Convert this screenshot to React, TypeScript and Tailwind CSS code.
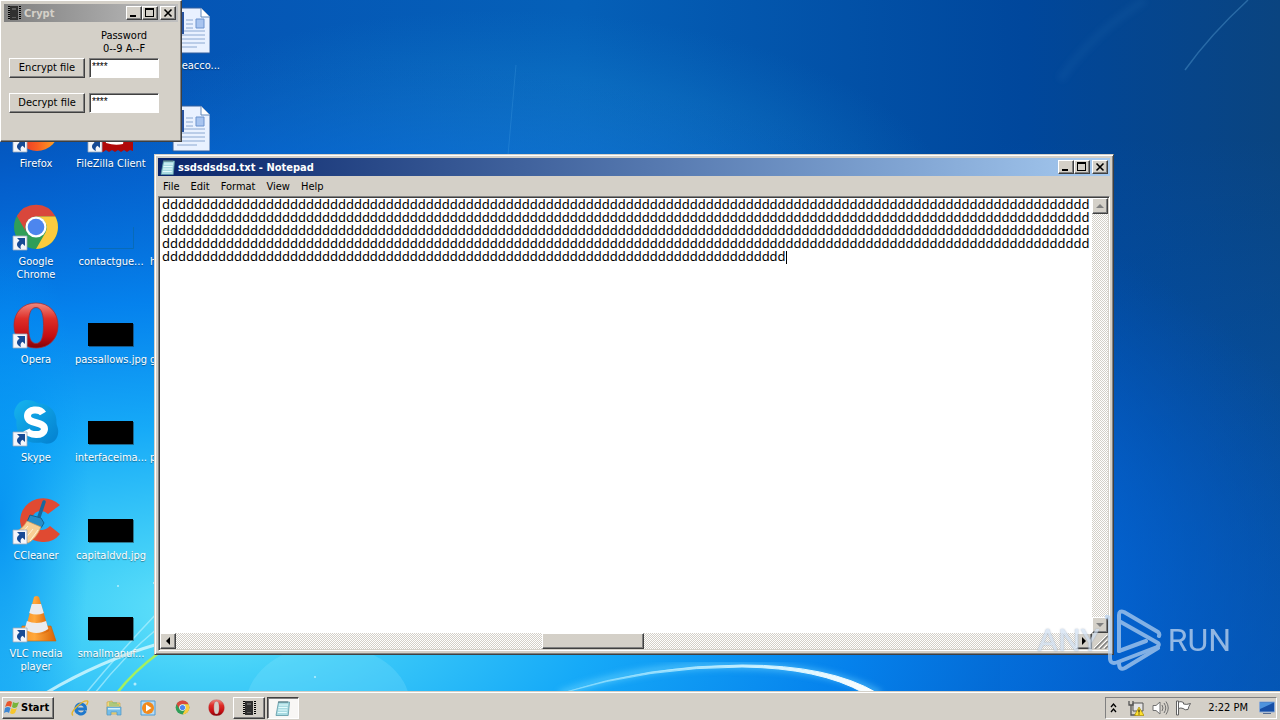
import React from "react";

const bevel =
  "bg-[#d4d0c8] border border-t-white border-l-white border-r-[#404040] border-b-[#404040] shadow-[inset_-1px_-1px_0_#808080]";

function Wallpaper() {
  return (
    <svg className="absolute inset-0 h-full w-full" viewBox="0 0 1280 691" preserveAspectRatio="none" aria-hidden="true">
      <defs>
        <linearGradient id="sky" x1="0" y1="0" x2="1" y2="0">
          <stop offset="0" stopColor="#0450b4" />
          <stop offset="0.45" stopColor="#0560b8" />
          <stop offset="0.8" stopColor="#00479c" />
          <stop offset="1" stopColor="#0a4480" />
        </linearGradient>
        <radialGradient id="glow" gradientUnits="userSpaceOnUse" cx="0" cy="0" r="1" gradientTransform="translate(210 610) scale(1180 560)">
          <stop offset="0" stopColor="#66e4fa" />
          <stop offset="0.12" stopColor="#42cff8" />
          <stop offset="0.33" stopColor="#16aaf8" />
          <stop offset="0.55" stopColor="#0584f0" stopOpacity="0.95" />
          <stop offset="0.78" stopColor="#0464d4" stopOpacity="0.75" />
          <stop offset="1" stopColor="#0454b8" stopOpacity="0" />
        </radialGradient>
        <radialGradient id="top" gradientUnits="userSpaceOnUse" cx="0" cy="0" r="1" gradientTransform="translate(500 220) scale(460 210)">
          <stop offset="0" stopColor="#2aa0e4" stopOpacity="0.85" />
          <stop offset="1" stopColor="#1080d0" stopOpacity="0" />
        </radialGradient>
        <radialGradient id="edge" gradientUnits="userSpaceOnUse" cx="0" cy="0" r="1" gradientTransform="translate(0 520) scale(90 300)">
          <stop offset="0" stopColor="#008cf0" stopOpacity="0.8" />
          <stop offset="1" stopColor="#0098f4" stopOpacity="0" />
        </radialGradient>
        <linearGradient id="low" x1="0" y1="0" x2="0" y2="1">
          <stop offset="0.2" stopColor="#0060d0" stopOpacity="0" />
          <stop offset="1" stopColor="#0060d0" stopOpacity="0.6" />
        </linearGradient>
        <linearGradient id="arc" x1="560" y1="0" x2="880" y2="0" gradientUnits="userSpaceOnUse">
          <stop offset="0" stopColor="#8fe0ff" stopOpacity="0.5" />
          <stop offset="0.6" stopColor="#c8f0ff" />
          <stop offset="1" stopColor="#fff" />
        </linearGradient>
        <filter id="soft"><feGaussianBlur stdDeviation="3" /></filter>
        <filter id="fine"><feGaussianBlur stdDeviation="0.6" /></filter>
      </defs>
      <rect width="1280" height="691" fill="url(#sky)" />
      <rect x="1000" width="280" height="691" fill="url(#low)" />
      <rect width="1280" height="691" fill="url(#top)" />
      <rect width="1280" height="691" fill="url(#glow)" />
      <rect width="1280" height="691" fill="url(#edge)" />
      <ellipse cx="328" cy="705" rx="82" ry="60" fill="#9cebff" opacity="0.2" />
      <path d="M560 694Q650 662 745 666Q830 668 880 694" fill="none" stroke="#78dcff" strokeWidth="7" opacity="0.5" filter="url(#soft)" />
      <path d="M562 693Q650 667 742 667Q820 668 864 693L877 693Q830 665 742 665Q650 665 562 693Z" fill="url(#arc)" stroke="url(#arc)" strokeWidth="1" />
      <path d="M46 693Q100 661 158 644" fill="none" stroke="#d8faff" strokeWidth="3" opacity="0.8" filter="url(#fine)" />
      <path d="M86 693Q120 652 158 612M95 693Q125 655 158 628" fill="none" stroke="#c0f5ff" strokeWidth="1.5" opacity="0.6" filter="url(#fine)" />
      <path d="M117 693Q133 672 160 652" fill="none" stroke="#a4f060" strokeWidth="2.5" filter="url(#fine)" />
      <path d="M1248 0Q1210 35 1185 70" fill="none" stroke="#3f83bb" strokeWidth="1.5" opacity="0.6" filter="url(#fine)" />
      <path d="M1145 0Q1090 35 1060 80" fill="none" stroke="#2c73b4" strokeWidth="8" opacity="0.15" filter="url(#soft)" />
      <path d="M516 65Q512 110 508 155" fill="none" stroke="#66b8ee" strokeWidth="1" opacity="0.2" />
      <g fill="#e4fbff" opacity="0.7"><circle cx="118" cy="586" r="1" /><circle cx="135" cy="684" r="1.5" /><circle cx="154" cy="583" r="1" /><circle cx="315" cy="677" r="1" /></g>
    </svg>
  );
}

function Shortcut() {
  return (
    <g>
      <path d="M1 33h14v14H1z" fill="#f4f6fa" stroke="#9aa9bd" strokeWidth="0.8" />
      <path d="M5 35h8v8l-2.500-2.300C8.500 42 8 43.500 9 46 4.500 44.500 3.500 40.500 7.500 37.600z" fill="#174a94" />
    </g>
  );
}

function IconBox({ children }: { children?: React.ReactNode }) {
  return <svg className="h-12 w-12 shrink-0" viewBox="0 0 48 48" aria-hidden="true">{children}</svg>;
}

function FirefoxIcon() {
  return (
    <IconBox>
      <defs><linearGradient id="ff" x1="0" y1="0" x2="1" y2="0"><stop offset="0" stopColor="#e0262c" /><stop offset="0.5" stopColor="#f95c22" /><stop offset="1" stopColor="#ffb024" /></linearGradient></defs>
      <circle cx="25" cy="24" r="22" fill="url(#ff)" />
      <circle cx="25" cy="22" r="11" fill="#5b3bb5" />
      <Shortcut />
    </IconBox>
  );
}

function FileZillaIcon() {
  return (
    <IconBox>
      <path d="M2 2h44v44l-3-1-3 2-3-2-3 2-3-2-3 2-3-2-3 2-3-2-3 2H2z" fill="#b00808" />
      <path d="M13 8h24v7H21v7h13v7h-8l-4 4h15l-1 6q-8 2-17-1z" fill="#fff" />
      <Shortcut />
    </IconBox>
  );
}

function ChromeArt() {
  return (
    <g>
      <circle cx="24" cy="24" r="22" fill="#2f9e58" />
      <path d="M4.900 13A22 22 0 0 1 43.500 13.500H24A11 11 0 0 0 14.500 29.500z" fill="#d9473c" />
      <path d="M43.300 13.500A22 22 0 0 1 24 46L33.500 29.500A11 11 0 0 0 24 13.500z" fill="#fbcb3e" />
      <circle cx="24" cy="24" r="10.500" fill="#fff" />
      <circle cx="24" cy="24" r="8.300" fill="#4d86ee" />
    </g>
  );
}

function OperaArt() {
  return (
    <g>
      <defs><linearGradient id="op" x1="0" y1="0" x2="0" y2="1"><stop offset="0" stopColor="#f08a80" /><stop offset="0.35" stopColor="#df2e28" /><stop offset="0.75" stopColor="#c40d12" /><stop offset="1" stopColor="#820408" /></linearGradient></defs>
      <path fillRule="evenodd" d="M24 2C37 2 46 11 46 24.500S37 47 24 47 2 38 2 24.500 11 2 24 2zM24 6.500c-6 0-7.500 8-7.500 18s1.500 18 7.500 18 7.500-8 7.500-18-1.500-18-7.500-18z" fill="url(#op)" stroke="#a32d36" strokeWidth="0.8" />
    </g>
  );
}

function SkypeIcon() {
  return (
    <IconBox>
      <defs><linearGradient id="sk" x1="0" y1="0" x2="1" y2="1"><stop offset="0" stopColor="#16b4ee" /><stop offset="1" stopColor="#0380d0" /></linearGradient></defs>
      <path d="M15 1C22 1 24 4 28 4.500 39 6 45 13 44.500 24 44.500 27 47 29 46 35 44 45 35 46 29 43.500 13 46 3 35 4.500 21 2 18 1 13 4 8 7 3 10 1 15 1z" fill="url(#sk)" />
      <path d="M31 14.500C28 9.500 15.500 9.500 15.500 17 15.500 26 32.500 21.500 32.500 30 32 37.500 17.500 37 14.500 31" fill="none" stroke="#fff" strokeWidth="7" />
      <Shortcut />
    </IconBox>
  );
}

function CCleanerIcon() {
  return (
    <IconBox>
      <path d="M48 8Q38-1 25 2 9 7 8 24q2 19 22 21 11 1 18-8L38 29q-6 6-13 3-6-4-5-11 2-7 9-7 4 0 7 3z" fill="#e04a32" />
      <path d="M32 5l-5 15" stroke="#17689d" strokeWidth="3.500" strokeLinecap="round" />
      <path d="M18 18l11 3 3 5-3 5-14-6z" fill="#268dc8" stroke="#14608e" />
      <path d="M15 24l14 6q-5 12-13 16L2 35q8-2 13-11z" fill="#f8cf94" stroke="#d59a55" strokeWidth="0.7" />
      <path d="M16 29L8 38m13-6l-8 10m13-9l-8 11" stroke="#fff0d4" />
      <Shortcut />
    </IconBox>
  );
}

function VlcIcon() {
  return (
    <IconBox>
      <defs><linearGradient id="vl" x1="0" y1="0" x2="1" y2="0"><stop offset="0" stopColor="#f99022" /><stop offset="0.4" stopColor="#ffa83c" /><stop offset="1" stopColor="#d96205" /></linearGradient></defs>
      <path d="M10 31h29l5 15H8z" fill="url(#vl)" stroke="#c96408" strokeWidth="0.6" />
      <path d="M22 2q2.500-2 5 0l10 34q-12 8-24 0z" fill="url(#vl)" />
      <path d="M19.800 9h9.300l2.700 9q-7 3-14.600 0zM14.900 26q10 4 19.200 0l2.200 8q-12 8-23.600 0z" fill="#ebebee" />
      <Shortcut />
    </IconBox>
  );
}

function DocumentIcon() {
  return (
    <IconBox>
      <path d="M11 1h28l9 9v36H11z" fill="#e9f1ff" stroke="#335e9d" />
      <path d="M39 1v9h9" fill="#fff" stroke="#6388ba" />
      <path d="M34 12h8v9h-8z" fill="#a8c4ef" stroke="#6c93ce" />
      <path d="M15 24h28M15 28h28M15 32h28M15 36h28M15 40h20M24 13h7M24 17h7M24 21h7" stroke="#8ba8d2" />
      <path d="M3 6h18v20H3z" fill="#fff" stroke="#2853a0" strokeWidth="2" />
      <path d="M7 11l3 10 3-8 3 8 3-10" fill="none" stroke="#2853a0" strokeWidth="2" />
    </IconBox>
  );
}

function ImageThumb() {
  return <IconBox><path d="M1 22h45v23H1z" fill="#000" /><path d="M2 45.500h44.500V23" fill="none" stroke="#222" strokeWidth="1" opacity="0.5" /></IconBox>;
}

function EmptyThumb() {
  return <IconBox><path d="M2 45.500h44.500V24" fill="none" stroke="#086bb8" strokeWidth="1" /></IconBox>;
}

type Item = { label?: string; icon?: React.ReactNode; align?: string };

const items: Item[] = [
  {},
  { label: "Firefox", icon: <FirefoxIcon /> },
  { label: "Google Chrome", icon: <IconBox><ChromeArt /><Shortcut /></IconBox>, align: "px-2 text-center" },
  { label: "Opera", icon: <IconBox><OperaArt /><Shortcut /></IconBox> },
  { label: "Skype", icon: <SkypeIcon /> },
  { label: "CCleaner", icon: <CCleanerIcon /> },
  { label: "VLC media player", icon: <VlcIcon />, align: "px-2 text-center" },
  {},
  { label: "FileZilla Client", icon: <FileZillaIcon /> },
  { label: "contactgue...", icon: <EmptyThumb /> },
  { label: "passallows.jpg", icon: <ImageThumb /> },
  { label: "interfaceima...", icon: <ImageThumb /> },
  { label: "capitaldvd.jpg", icon: <ImageThumb /> },
  { label: "smallmanuf...", icon: <ImageThumb /> },
  { label: "eacco...", icon: <DocumentIcon />, align: "pr-0.5 text-right" },
  { icon: <DocumentIcon /> },
  { label: "h", icon: <IconBox />, align: "text-left" },
  { label: "g", icon: <IconBox />, align: "text-left" },
  { label: "p", icon: <IconBox />, align: "text-left" },
];

function DesktopIcons() {
  return (
    <ul className="relative grid w-max grid-flow-col grid-cols-[72px_72px_72px] grid-rows-[repeat(7,98px)] gap-x-[3px] pt-[7px]">
      {items.map((item, i) => (
        <li key={i} className="flex flex-col items-center gap-1 text-white [text-shadow:0_1px_1px_#0006]">
          {item.icon}
          {item.label && <span className={`w-full leading-[13px] ${item.align ?? "whitespace-nowrap text-center"}`}>{item.label}</span>}
        </li>
      ))}
    </ul>
  );
}

function WindowButtons() {
  const cls = `${bevel} flex h-[14px] w-4 items-center justify-center`;
  return (
    <div className="flex items-center">
      <button aria-label="Minimize" className={cls}>
        <svg width="12" height="10" viewBox="0 0 12 10" shapeRendering="crispEdges"><path d="M2 7h6v2H2z" /></svg>
      </button>
      <button aria-label="Maximize" className={cls}>
        <svg width="12" height="10" viewBox="0 0 12 10" shapeRendering="crispEdges"><path fillRule="evenodd" d="M1 0h9v9H1zM2 2v6h7V2z" /></svg>
      </button>
      <button aria-label="Close" className={`${cls} ml-0.5`}>
        <svg width="12" height="10" viewBox="0 0 12 10"><path d="M2.500 1.500l7 7m0-7l-7 7" stroke="#000" strokeWidth="1.600" /></svg>
      </button>
    </div>
  );
}

function ChipIcon() {
  return (
    <svg className="h-4 w-4 shrink-0" viewBox="0 0 16 16" shapeRendering="crispEdges" aria-hidden="true">
      <path d="M4 1h8v14H4z" fill="#303030" />
      <path d="M2.500 1v14M13.500 1v14" stroke="#000" strokeWidth="2" strokeDasharray="1 1" />
      <path d="M6 3h4v2H6zM6 12h4v1H6z" fill="#5c5c5c" />
    </svg>
  );
}

function NotepadIcon() {
  return (
    <svg className="h-4 w-4 shrink-0" viewBox="0 0 16 16" aria-hidden="true">
      <path d="M3.500 2h11l-1.300 13.500H1z" fill="#a8dbe2" stroke="#5b97a3" strokeWidth="0.8" />
      <path d="M4 5h9M3.500 7.500h9M3.200 10h9M2.800 12.500h9" stroke="#e4fbfc" />
      <path d="M4 1v2m2-2v2m2-2v2m2-2v2m2-2v2" stroke="#52737b" />
    </svg>
  );
}

function CryptWindow() {
  const rows = ["Encrypt file", "Decrypt file"];
  return (
    <section aria-label="Crypt" className={`${bevel} absolute left-0 top-0 flex h-[142px] w-[182px] flex-col p-[3px]`}>
      <header className="flex h-[18px] items-center gap-0.5 bg-linear-to-r from-[#808080] to-[#c0c0c0] pl-0.5 pr-0.5">
        <ChipIcon />
        <h2 className="flex-1 font-bold text-[#d4d0c8]">Crypt</h2>
        <WindowButtons />
      </header>
      <div className="flex flex-col pl-[5px] pt-[7px]">
        <p className="ml-20 w-[70px] text-center leading-[13px]">Password<br />0--9 A--F</p>
        <div className="mt-[3px] flex flex-col gap-[15px]">
          {rows.map((label) => (
            <div key={label} className="flex items-center gap-1">
              <button className={`${bevel} h-5 w-[76px] leading-4`}>{label}</button>
              <input aria-label={`${label} password`} defaultValue="****" className="h-5 w-[70px] border border-[#808080] border-b-white border-r-white bg-white px-0.5 pb-1 font-['Liberation_Sans',sans-serif] text-[10px] shadow-[inset_1px_1px_0_#404040] outline-none" />
            </div>
          ))}
        </div>
      </div>
    </section>
  );
}

const track = "bg-[length:2px_2px] bg-[repeating-conic-gradient(#ffffff_0_25%,#d4d0c8_0_50%)]";

function ScrollButton({ label, path, off }: { label: string; path: string; off?: boolean }) {
  return (
    <button aria-label={label} className={`${bevel} flex h-4 w-4 shrink-0 items-center justify-center`}>
      <svg width="8" height="8" viewBox="0 0 8 8"><path d={path} fill={off ? "#808080" : "#000"} /></svg>
    </button>
  );
}

const content = [116, 116, 116, 116, 78].map((n) => "d".repeat(n)).join("\n");

function NotepadWindow() {
  return (
    <section aria-label="Notepad" className="absolute left-[154px] top-[154px] flex h-[501px] w-[960px] flex-col border border-[#d4d0c8] border-b-[#404040] border-r-[#404040] bg-[#d4d0c8] p-[3px] shadow-[inset_1px_1px_0_#fff,inset_-1px_-1px_0_#808080]">
      <header className="flex h-[18px] items-center gap-0.5 bg-linear-to-r from-[#0a246a] to-[#a6caf0] pl-0.5 pr-0.5">
        <NotepadIcon />
        <h1 className="flex-1 font-bold text-white">ssdsdsdsd.txt - Notepad</h1>
        <WindowButtons />
      </header>
      <nav className="flex h-5 items-center gap-[11px] pl-[5px]">
        {["File", "Edit", "Format", "View", "Help"].map((m) => <button key={m}>{m}</button>)}
      </nav>
      <div className="flex min-h-0 flex-1 flex-col border border-b-white border-l-[#808080] border-r-white border-t-[#808080] pb-px pr-px shadow-[inset_1px_1px_0_#404040]">
        <div className="ml-px mt-px flex min-h-0 flex-1">
          <div className="relative flex min-w-0 flex-1">
            <textarea aria-label="Text" wrap="off" spellCheck={false} defaultValue={content} className="flex-1 resize-none overflow-hidden bg-white pl-0.5 font-['Noto_Sans',sans-serif] text-[13px] leading-[13px] outline-none" />
            <span className="absolute left-[626px] top-[53px] h-[13px] w-px bg-black" />
          </div>
          <div className={`${track} flex w-4 flex-col justify-between`}>
            <ScrollButton label="Scroll up" path="M0 6L4 2L8 6Z" off />
            <ScrollButton label="Scroll down" path="M0 2L4 6L8 2Z" off />
          </div>
        </div>
        <div className="ml-px flex h-4">
          <ScrollButton label="Scroll left" path="M6 0L2 4L6 8Z" />
          <div className={`${track} flex-1`}>
            <div className={`${bevel} ml-[366px] h-4 w-[102px]`} />
          </div>
          <ScrollButton label="Scroll right" path="M2 0L6 4L2 8Z" />
          <svg className="h-4 w-4" viewBox="0 0 16 16"><path d="M3 16L16 3M8 16l8-8M13 16l3-3" stroke="#808080" strokeWidth="1.500" /><path d="M2 15L15 2M7 15l8-8M12 15l3-3" stroke="#fff" /></svg>
        </div>
      </div>
    </section>
  );
}

function Watermark() {
  return (
    <div className="pointer-events-none absolute bottom-5 right-[49px] flex h-[62px] items-center gap-[5px] font-['Roboto',sans-serif] text-[32px] text-[#cfdff2] opacity-70">
      <span className="[text-shadow:0_0_2px_#8c9aae]">ANY</span>
      <svg className="h-[62px] w-[58px]" viewBox="0 0 58 62" fill="none" stroke="#b9d4f1" strokeWidth="4" strokeLinejoin="round" strokeLinecap="round" aria-hidden="true">
        <path d="M14 42V6q0-5 5-3l34 20q2 2 1 4M14 12l39 22q2 2-1 4L13 53q-7 3-8-3V13q0-6-4-5" />
        <path d="M14 42l27-10M14 54q0 8 6 5l33-20" />
      </svg>
      <span>RUN</span>
    </div>
  );
}

function Taskbar() {
  const quick = "flex h-5 w-5 items-center justify-center";
  return (
    <footer className="relative flex h-[29px] shrink-0 items-center border-t border-[#d4d0c8] bg-[#d4d0c8] pl-0.5 pr-[3px] pt-[3px] shadow-[inset_0_1px_0_#fff]">
      <button className={`${bevel} flex h-[22px] w-[52px] items-center gap-px pl-px font-bold`}>
        <svg className="h-4 w-4 shrink-0" viewBox="0 0 16 16" aria-hidden="true">
          <path d="M3 2q3-2 5 0L7 7Q4 5 1 7z" fill="#e9562c" /><path d="M9 2q3 2 6 0l-2 5q-3 2-5 0z" fill="#79b43b" />
          <path d="M1 8q3-2 5.500 0L5 13Q3 11 0 13z" fill="#3e87d3" /><path d="M7.500 8q3 2 5.500 0l-2 5q-3 2-5 0z" fill="#f7c62c" />
        </svg>
        Start
      </button>
      <nav className="ml-4 flex items-center gap-[14px]">
        <a href="#ie" aria-label="Internet Explorer" className={quick}>
          <svg width="18" height="18" viewBox="0 0 18 18"><path d="M14.500 12Q12 16 8 14.500 4 12.500 5 8.500 6.500 4.500 10.500 5q4 1 4 5H6" fill="none" stroke="#1f78cc" strokeWidth="3" /><path d="M2 16.500Q-1 14 6 7.500 13 1 16.500 2q1 1-1 4" fill="none" stroke="#e6b52a" strokeWidth="1.400" /></svg>
        </a>
        <a href="#explorer" aria-label="Explorer" className={quick}>
          <svg width="18" height="18" viewBox="0 0 18 18"><path d="M2 3l5-1 1 2h7v11H2z" fill="#f1d77d" stroke="#caa84b" strokeWidth="0.700" /><path d="M4 4h8M4 6h10" stroke="#6cba79" /><path d="M2 8h14v8h-4v-3H6v3H2z" fill="#75bde8" stroke="#4f95c3" strokeWidth="0.700" /><path d="M3 9h12v1.500H3z" fill="#d4f0fc" /></svg>
        </a>
        <a href="#player" aria-label="Media Player" className={quick}>
          <svg width="18" height="18" viewBox="0 0 18 18"><path d="M2 2h14v14H2z" fill="#b7dcf5" stroke="#4c9bd5" /><circle cx="9" cy="9" r="6" fill="#f28a1c" /><path d="M7 5.500L12.500 9 7 12.500z" fill="#fff" /></svg>
        </a>
        <a href="#chrome" aria-label="Chrome" className={quick}><svg width="15" height="15" viewBox="0 0 48 48"><ChromeArt /></svg></a>
        <a href="#opera" aria-label="Opera" className={quick}><svg width="17" height="17" viewBox="0 0 48 48"><OperaArt /></svg></a>
      </nav>
      <button aria-label="Crypt" className={`${bevel} ml-[7px] flex h-[22px] w-8 items-center justify-center`}><ChipIcon /></button>
      <button aria-label="Notepad" className="ml-0.5 flex h-[22px] w-8 items-center justify-center border border-b-white border-l-[#404040] border-r-white border-t-[#404040] bg-[#f8f7f5] shadow-[inset_1px_1px_0_#808080]"><NotepadIcon /></button>
      <div className="ml-auto flex h-[22px] items-center border border-b-white border-l-[#808080] border-r-white border-t-[#808080] pl-1">
        <svg width="8" height="12" viewBox="0 0 8 12" fill="none" stroke="#000" strokeWidth="1.300"><path d="M1 5l2.500-3L6 5M1 10l2.500-3L6 10" /></svg>
        <svg className="ml-2.5" width="16" height="16" viewBox="0 0 16 16"><path d="M5 3h10v8H5z" fill="#e5e5e5" stroke="#555" /><path d="M1 1v4h4V1M3 5v10h5" fill="none" stroke="#555" strokeWidth="1.300" /><path d="M11 7l5 8.500H6.500z" fill="#ffe12e" stroke="#a88900" strokeWidth="0.700" /><path d="M11 9.500v3m0 1v1" stroke="#000" /></svg>
        <svg className="ml-2" width="17" height="16" viewBox="0 0 17 16" fill="none" stroke="#707070"><path d="M1 5.500h3L8 2v12L4 10.500H1z" fill="#fff" /><path d="M10 5q2 3 0 6M12 3q3.500 5 0 10M14 1.500q4.500 6.500 0 13" /></svg>
        <svg className="ml-1.5" width="17" height="16" viewBox="0 0 17 16" stroke="#606060"><path d="M1.500 1v14h2V1z" fill="#fff" /><path d="M3.500 2Q6 1 8.500 2.500V4q3 1 7-.5-2 3-2.500 6-3 1-5-1-2-1-4.500 0z" fill="#fff" /></svg>
        <time className="ml-4">2:22 PM</time>
        <svg className="ml-2.5" width="18" height="16" viewBox="0 0 18 16"><path d="M1.500 2h15v10h-15z" fill="#174fa6" stroke="#8aa9d5" /><path d="M2 2.500h14L2 9z" fill="#4e93dd" /><path d="M5 13.500h8" stroke="#556c91" /></svg>
      </div>
    </footer>
  );
}

export default function App() {
  return (
    <div className="flex h-screen w-full flex-col overflow-hidden bg-[#0560b8] font-['DejaVu_Sans_Condensed','DejaVu_Sans',sans-serif] text-[11px] leading-[13px] text-black">
      <main className="relative min-h-0 flex-1">
        <Wallpaper />
        <DesktopIcons />
        <NotepadWindow />
        <CryptWindow />
        <Watermark />
      </main>
      <Taskbar />
    </div>
  );
}
